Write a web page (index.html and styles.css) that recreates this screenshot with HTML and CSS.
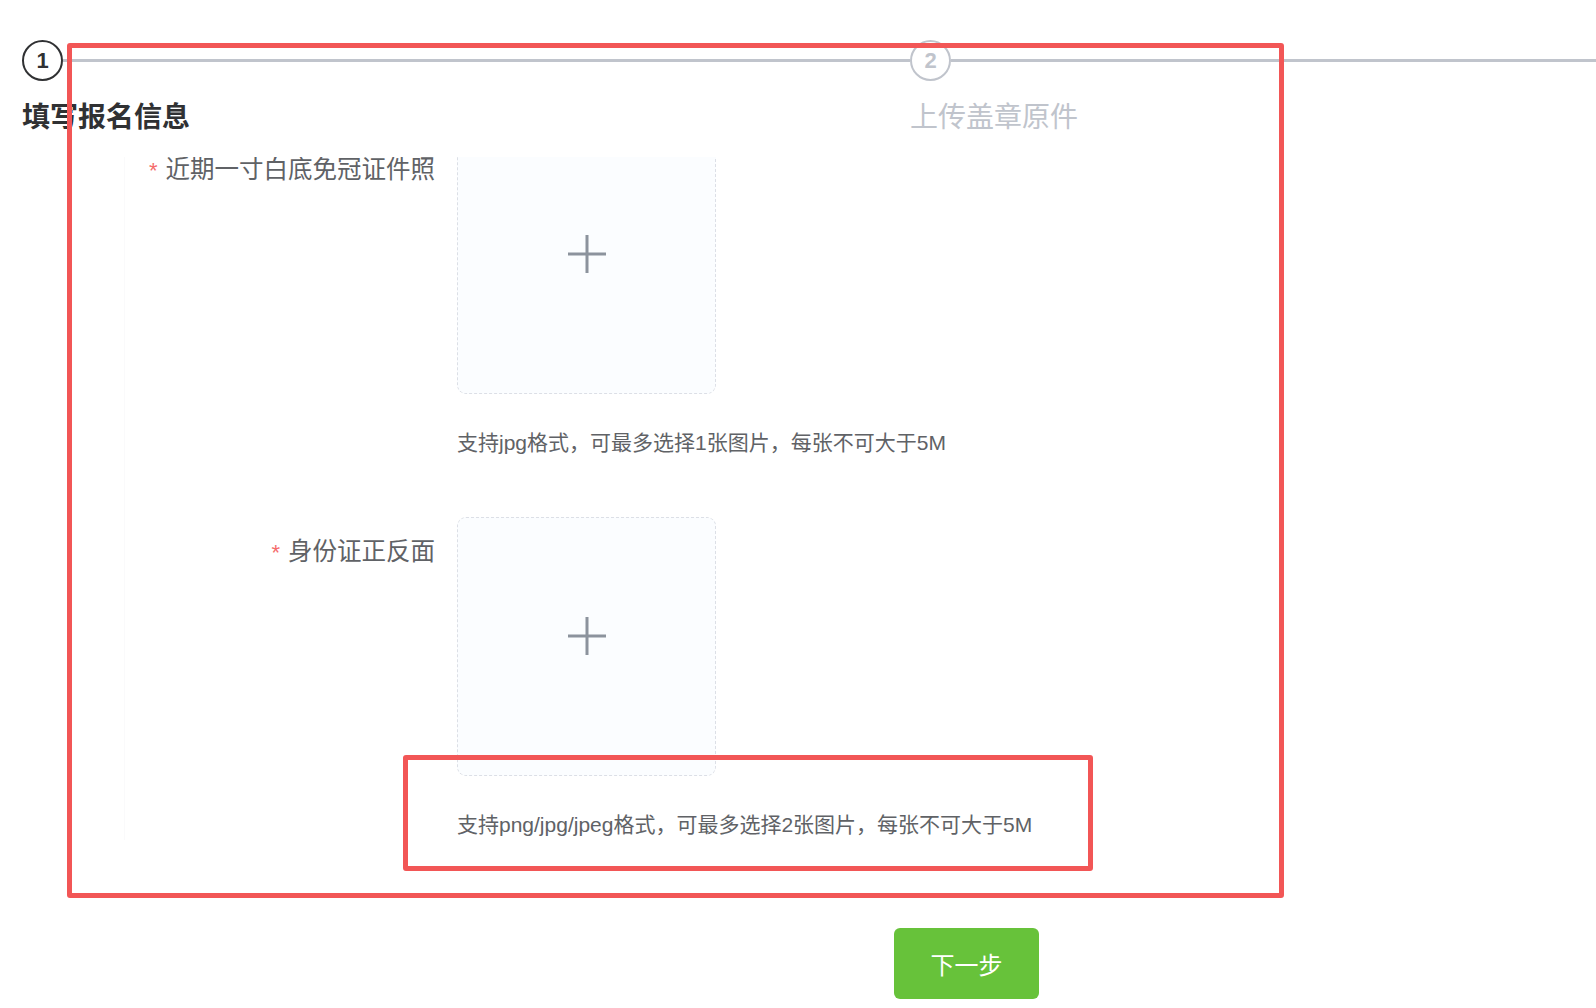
FILE: index.html
```html
<!DOCTYPE html>
<html lang="zh-CN">
<head>
<meta charset="utf-8">
<title>填写报名信息</title>
<link rel="stylesheet" href="styles.css">
</head>
<body>
<div class="page">
  <div class="steps">
    <div class="step step-first">
      <div class="step-head">
        <div class="step-icon is-process">1</div>
        <div class="step-line"></div>
      </div>
      <div class="step-title is-process">填写报名信息</div>
    </div>
    <div class="step step-last">
      <div class="step-head">
        <div class="step-icon is-wait">2</div>
        <div class="step-line"></div>
      </div>
      <div class="step-title is-wait">上传盖章原件</div>
    </div>
  </div>

  <div class="form-clip">
    <div class="form">
      <div class="form-item item-first">
        <label class="form-label"><span class="req">*</span>近期一寸白底免冠证件照</label>
        <div class="form-content">
          <div class="upload-card">
            <svg class="plus" width="42" height="42" viewBox="0 0 42 42"><path d="M21 2 V40 M2 21 H40" stroke="#8c939d" stroke-width="3" fill="none"/></svg>
          </div>
          <div class="hint">支持jpg格式，可最多选择1张图片，每张不可大于5M</div>
        </div>
      </div>
      <div class="form-item item-second">
        <label class="form-label"><span class="req">*</span>身份证正反面</label>
        <div class="form-content">
          <div class="upload-card">
            <svg class="plus" width="42" height="42" viewBox="0 0 42 42"><path d="M21 2 V40 M2 21 H40" stroke="#8c939d" stroke-width="3" fill="none"/></svg>
          </div>
          <div class="hint">支持png/jpg/jpeg格式，可最多选择2张图片，每张不可大于5M</div>
        </div>
      </div>
    </div>
  </div>

  <div class="footer">
    <button class="btn-next" type="button">下一步</button>
  </div>

  <div class="mark mark-outer"></div>
  <div class="mark mark-inner"></div>
</div>
</body>
</html>
```

FILE: styles.css
```css
html, body {
  margin: 0;
  padding: 0;
  background: #ffffff;
  overflow: hidden;
}

body {
  font-family: "Liberation Sans", "Noto Sans CJK SC", sans-serif;
  color: #606266;
}

.page {
  position: relative;
  width: 1596px;
  height: 1008px;
}

/* ---------- steps ---------- */
.steps {
  display: flex;
  padding-left: 22px;
  padding-top: 40px;
}

.step-first {
  width: 888px;
  flex: none;
}

.step-last {
  flex: 1;
}

.step-head {
  display: flex;
  align-items: center;
  height: 41px;
}

.step-icon {
  width: 37px;
  height: 37px;
  border-radius: 50%;
  border: 2px solid;
  display: flex;
  align-items: center;
  justify-content: center;
  font-size: 22px;
  font-weight: bold;
  flex: none;
  box-sizing: content-box;
}

.step-icon.is-process {
  border-color: #303133;
  color: #303133;
}

.step-icon.is-wait {
  border-color: #c0c4cc;
  color: #c0c4cc;
}

.step-line {
  flex: 1;
  height: 3px;
  background: #c0c4cc;
}

.step-title {
  margin-top: 17px;
  font-size: 28px;
  line-height: 40px;
  height: 40px;
}

.step-title.is-process {
  color: #303133;
  font-weight: bold;
}

.step-title.is-wait {
  color: #c0c4cc;
}

/* ---------- form ---------- */
.form-clip {
  margin-top: 19px;
  margin-left: 124px;
  width: 1060px;
  overflow: hidden;
  border-left: 1px solid #fafafb;
}

.form {
  margin-top: -22px;
}

.form-item {
  display: flex;
}

.item-second {
  margin-top: 59px;
}

.form-label {
  width: 311px;
  padding-right: 22px;
  text-align: right;
  font-size: 24.5px;
  line-height: 70px;
  color: #606266;
  flex: none;
  box-sizing: content-box;
  margin-left: -1px;
  white-space: nowrap;
}

.req {
  color: #f56c6c;
  font-size: 22px;
  margin-right: 8px;
}

.form-content {
  display: flex;
  flex-direction: column;
}

.upload-card {
  width: 257px;
  height: 257px;
  border: 1px dashed #dcdfe6;
  border-radius: 9px;
  background: #fbfdff;
  display: flex;
  justify-content: center;
  align-items: flex-start;
  box-sizing: content-box;
}

.plus {
  margin-top: 97px;
  display: block;
}

.hint {
  margin-top: 34px;
  font-size: 21px;
  line-height: 30px;
  color: #606266;
  white-space: nowrap;
}

/* ---------- footer ---------- */
.footer {
  display: flex;
  padding-left: 894px;
  margin-top: 88px;
}

.btn-next {
  width: 145px;
  height: 71px;
  border: none;
  border-radius: 6px;
  background: #67c23a;
  color: #ffffff;
  font-family: "Liberation Sans", "Noto Sans CJK SC", sans-serif;
  font-size: 24px;
  padding: 0;
  cursor: pointer;
}

/* ---------- annotation marks ---------- */
.mark {
  position: absolute;
  border: 5px solid #f25656;
  border-radius: 3px;
  box-sizing: border-box;
  pointer-events: none;
}

.mark-outer {
  left: 67px;
  top: 43px;
  width: 1217px;
  height: 855px;
}

.mark-inner {
  left: 403px;
  top: 755px;
  width: 690px;
  height: 116px;
}
```
